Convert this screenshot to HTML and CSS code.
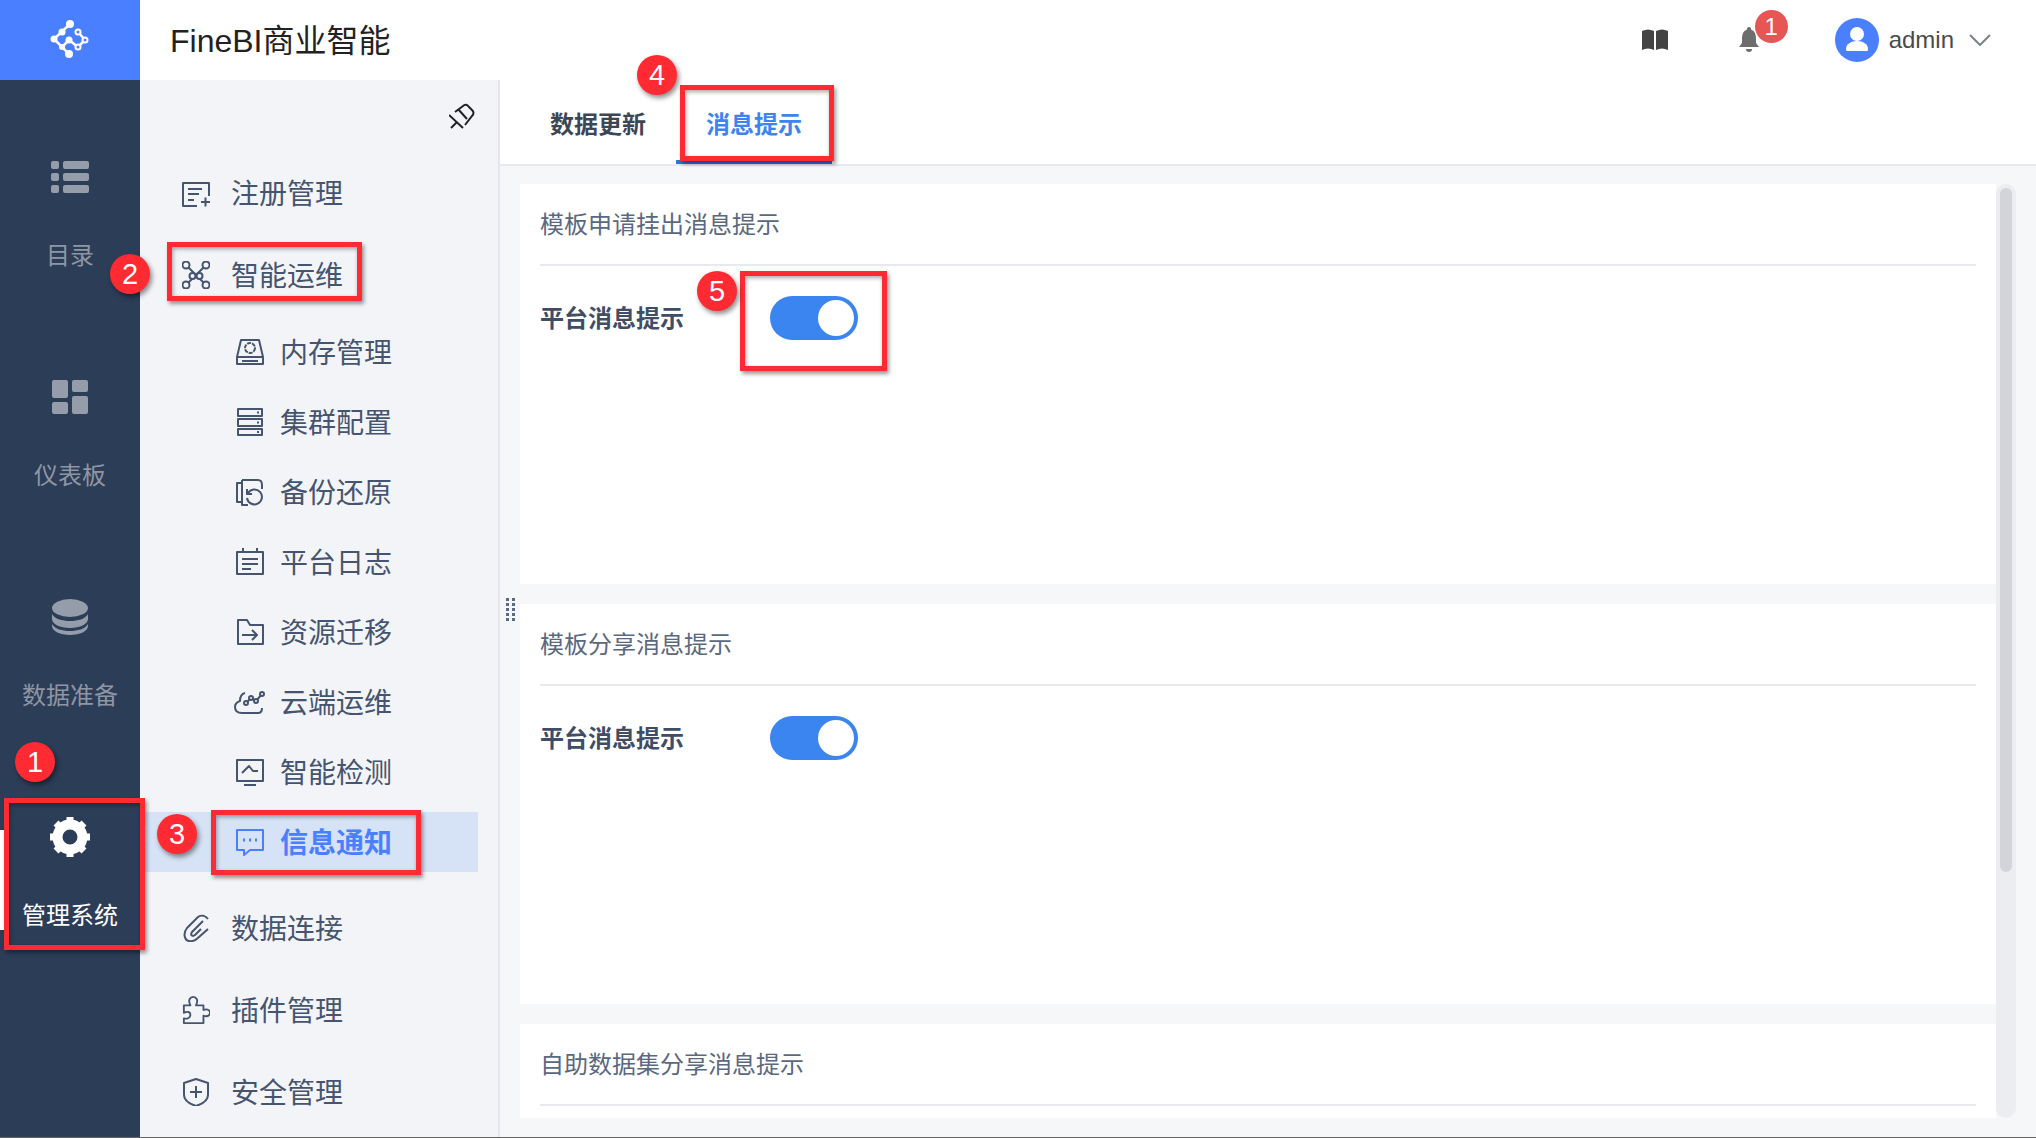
FILE: index.html
```html
<!DOCTYPE html>
<html lang="zh-CN">
<head>
<meta charset="UTF-8">
<meta name="viewport" content="width=device-width, initial-scale=1.0">
<title>FineBI商业智能</title>
<link rel="stylesheet" href="styles.css">
</head>
<body>
  <div class="app">
    <!-- left rail -->
    <aside class="rail">
      <div class="logo">
        <svg width="60" height="60" viewBox="0 0 60 60">
          <path class="logo-line" d="M30 14L14 29L29 44M22 37L29 30L38 37L45 30L38 22"/>
          <circle class="logo-dot" cx="30" cy="14" r="4"/>
          <circle class="logo-dot" cx="22" cy="22" r="3.5"/>
          <circle class="logo-dot" cx="14" cy="29" r="3.5"/>
          <circle class="logo-dot" cx="29" cy="30" r="3.5"/>
          <circle class="logo-dot" cx="22" cy="37" r="3"/>
          <circle class="logo-dot" cx="29" cy="44" r="4"/>
          <circle class="logo-ring" cx="38" cy="22" r="2.5"/>
          <circle class="logo-ring" cx="45" cy="30" r="2.5"/>
          <circle class="logo-ring" cx="38" cy="37" r="2.5"/>
        </svg>
      </div>
      <a class="rail-item">
        <svg class="rail-icon" width="40" height="40" viewBox="0 0 40 40">
          <rect x="1" y="4" width="8" height="8" rx="2"/><rect x="13" y="4" width="26" height="8" rx="2"/>
          <rect x="1" y="16" width="8" height="8" rx="2"/><rect x="13" y="16" width="26" height="8" rx="2"/>
          <rect x="1" y="28" width="8" height="8" rx="2"/><rect x="13" y="28" width="26" height="8" rx="2"/>
        </svg>
        <span class="rail-text">目录</span>
      </a>
      <a class="rail-item">
        <svg class="rail-icon" width="40" height="40" viewBox="0 0 40 40">
          <rect x="2" y="3" width="16" height="18" rx="2"/><rect x="22" y="3" width="16" height="12" rx="2"/>
          <rect x="2" y="25" width="16" height="12" rx="2"/><rect x="22" y="19" width="16" height="18" rx="2"/>
        </svg>
        <span class="rail-text">仪表板</span>
      </a>
      <a class="rail-item">
        <svg class="rail-icon" width="40" height="40" viewBox="0 0 40 40">
          <ellipse cx="20" cy="11" rx="18" ry="9"/>
          <path d="M2 17c3 5 10 7 18 7s15-2 18-7v5c0 5-8 9-18 9S2 27 2 22z"/>
          <path d="M2 27c3 5 10 7 18 7s15-2 18-7v2c0 5-8 9-18 9S2 34 2 29z"/>
        </svg>
        <span class="rail-text">数据准备</span>
      </a>
      <a class="rail-item active">
        <svg class="rail-icon" width="40" height="40" viewBox="-20 -20 40 40">
          <circle class="gear-ring" r="12.5"/>
          <path class="gear-teeth" d="M0-20V-14M0 14V20M-20 0H-14M14 0H20M-14-14L-10-10M10 10L14 14M14-14L10-10M-10 10L-14 14"/>
        </svg>
        <span class="rail-text">管理系统</span>
      </a>
    </aside>

    <div class="main">
      <header class="topbar">
        <h1 class="title">FineBI商业智能</h1>
        <div class="top-tools">
          <svg class="book" width="26" height="24" viewBox="0 0 26 24">
            <path d="M0 3Q6 0 12 3V22Q6 19 0 22Z"/><path d="M26 3Q20 0 14 3V22Q20 19 26 22Z"/>
          </svg>
          <div class="bell-wrap">
            <svg width="20" height="26" viewBox="0 0 20 26">
              <path d="M10 0a2 2 0 0 1 2 2.500C16 4 17 8 17 12v4l3 4H0l3-4v-4C3 8 4 4 8 2.500A2 2 0 0 1 10 0z"/>
              <path d="M7 22h6a3 3 0 0 1-6 0z"/>
            </svg>
            <span class="bell-badge">1</span>
          </div>
          <div class="user">
            <svg width="44" height="44" viewBox="0 0 44 44">
              <circle class="avatar-bg" cx="22" cy="22" r="22"/>
              <circle class="avatar-fg" cx="22" cy="16" r="7"/>
              <path class="avatar-fg" d="M12 33c-1 0-1-1-1-2 0-5 5-8 11-8s11 3 11 8c0 1 0 2-1 2z"/>
            </svg>
            <span class="user-name">admin</span>
            <svg class="chevron" width="22" height="12" viewBox="0 0 22 12"><path d="M1 1L11 11L21 1"/></svg>
          </div>
        </div>
      </header>

      <div class="body">
        <nav class="sidebar">
          <div class="pin-row">
            <svg class="pin" width="26" height="26" viewBox="0 0 26 26">
              <path d="M0 12L14 25M6 9L14 3Q17 0 20 4L23 7Q26 10 23 13L16 22M9 6L18 16M2 25L8 19"/>
            </svg>
          </div>

          <a class="nav-item">
            <svg class="ico" width="28" height="28" viewBox="0 0 28 28"><path d="M27 17V4H1V27H15M6 10H20M6 15H17M6 21H12M19 23H28M23.500 18.500V27.500"/></svg>
            <span class="label">注册管理</span>
          </a>
          <a class="nav-item">
            <svg class="ico" width="28" height="28" viewBox="0 0 28 28">
              <path d="M4 4L24 24M24 4L4 24"/>
              <circle class="ico-node" cx="4" cy="4" r="3.500"/><circle class="ico-node" cx="24" cy="4" r="3.500"/>
              <circle class="ico-node" cx="4" cy="24" r="3.500"/><circle class="ico-node" cx="24" cy="24" r="3.500"/>
              <circle class="ico-node" cx="10.500" cy="15" r="3"/><circle class="ico-node" cx="17.500" cy="15" r="3"/>
            </svg>
            <span class="label">智能运维</span>
          </a>
          <div class="sub-list">
            <a class="sub-item">
              <svg class="ico" width="28" height="28" viewBox="0 0 28 28"><path d="M5 2H23L27 19V26H1V19ZM1 19H27M6 23H22"/><circle cx="14" cy="10" r="5" stroke-dasharray="4 1"/></svg>
              <span class="label">内存管理</span>
            </a>
            <a class="sub-item">
              <svg class="ico" width="28" height="28" viewBox="0 0 28 28"><path d="M2 1H26V8H2ZM2 11H26V18H2ZM2 21H26V27H2ZM21 4.500H23M21 14.500H23M21 24H23"/></svg>
              <span class="label">集群配置</span>
            </a>
            <a class="sub-item">
              <svg class="ico" width="28" height="28" viewBox="0 0 28 28"><path d="M6 2H22C25 2 26 4 26 7V11M6 2V27H12M6 5H1V24H6M12 15A7.500 7.500 0 1 1 11 20M11 11V16H16"/></svg>
              <span class="label">备份还原</span>
            </a>
            <a class="sub-item">
              <svg class="ico" width="28" height="28" viewBox="0 0 28 28"><path d="M1 4H27V26H1ZM7 0V4M21 0V4M6 11H22M6 16H22M6 21H15"/></svg>
              <span class="label">平台日志</span>
            </a>
            <a class="sub-item">
              <svg class="ico" width="28" height="28" viewBox="0 0 28 28"><path d="M2 2H11L14 7H27V26H2ZM6 17H21M16 12L21 17L16 22"/></svg>
              <span class="label">资源迁移</span>
            </a>
            <a class="sub-item">
              <svg class="ico ico-wide" width="32" height="28" viewBox="0 0 32 28"><path d="M11 5C7 6 6 9 6 13C3 14 1 16 1 19C1 23 4 25 8 25H24C27 25 28 23 28 20"/><path d="M12 15L17 10L22 13L28 6"/><circle class="ico-node" cx="12" cy="15" r="2"/><circle class="ico-node" cx="17" cy="10" r="2"/><circle class="ico-node" cx="22" cy="13" r="2"/><circle class="ico-node" cx="28" cy="6" r="2"/></svg>
              <span class="label">云端运维</span>
            </a>
            <a class="sub-item">
              <svg class="ico" width="28" height="28" viewBox="0 0 28 28"><path d="M1 2H27V23H1ZM8 27H20M6 15L13 8L17 13H22"/></svg>
              <span class="label">智能检测</span>
            </a>
            <a class="sub-item selected">
              <svg class="ico" width="28" height="28" viewBox="0 0 28 28"><path d="M1 2H27V22H14L8 27V22H1Z"/><path class="ico-dots" d="M7 12H9M13 12H15M19 12H21"/></svg>
              <span class="label">信息通知</span>
            </a>
          </div>
          <a class="nav-item">
            <svg class="ico" width="28" height="28" viewBox="0 0 28 28"><path d="M26 5C23 1 19 1 16 3L5 14C1 19 2 26 7 27C11 28 14 26 17 23L26 15M21 7L10 18C8 21 10 23 13 21L19 15"/></svg>
            <span class="label">数据连接</span>
          </a>
          <a class="nav-item">
            <svg class="ico" width="28" height="28" viewBox="0 0 30 30"><path d="M2 10H9C6 4 9 1 12 1S18 4 15 10H23V15C28 13 30 16 30 18S28 23 23 21V29H2V24C6 25 9 23 9 20S6 16 2 18Z"/></svg>
            <span class="label">插件管理</span>
          </a>
          <a class="nav-item">
            <svg class="ico" width="28" height="28" viewBox="0 0 28 28"><path d="M14 1L26 5V17C26 22 20 26 14 28C8 26 2 22 2 17V5ZM14 8V20M8 14H20"/></svg>
            <span class="label">安全管理</span>
          </a>
        </nav>

        <section class="content">
          <div class="tabs">
            <a class="tab">数据更新</a>
            <a class="tab active">消息提示</a>
          </div>
          <div class="panel">
            <div class="cards">
              <div class="card">
                <h3 class="card-title">模板申请挂出消息提示</h3>
                <div class="card-row">
                  <span class="row-label">平台消息提示</span>
                  <span class="switch"><span class="knob"></span></span>
                </div>
              </div>
              <div class="card">
                <h3 class="card-title">模板分享消息提示</h3>
                <div class="card-row">
                  <span class="row-label">平台消息提示</span>
                  <span class="switch"><span class="knob"></span></span>
                </div>
              </div>
              <div class="card">
                <h3 class="card-title">自助数据集分享消息提示</h3>
              </div>
            </div>
            <div class="scrollbar"><div class="scroll-thumb"></div></div>
          </div>
        </section>
      </div>
    </div>
  </div>
  <div class="bottom-line"></div>

  <!-- drag handle between the menu and the content -->
  <svg class="grip" width="10" height="24" viewBox="0 0 10 24">
    <rect x="0" y="0" width="3" height="3"/><rect x="6" y="0" width="3" height="3"/>
    <rect x="0" y="5" width="3" height="3"/><rect x="6" y="5" width="3" height="3"/>
    <rect x="0" y="10" width="3" height="3"/><rect x="6" y="10" width="3" height="3"/>
    <rect x="0" y="15" width="3" height="3"/><rect x="6" y="15" width="3" height="3"/>
    <rect x="0" y="20" width="3" height="3"/><rect x="6" y="20" width="3" height="3"/>
  </svg>

  <!-- red annotations laid over the screenshot -->
  <div class="box box-1"></div>
  <div class="box box-2"></div>
  <div class="box box-3"></div>
  <div class="box box-4"></div>
  <div class="box box-5"></div>
  <span class="step step-1">1</span>
  <span class="step step-2">2</span>
  <span class="step step-3">3</span>
  <span class="step step-4">4</span>
  <span class="step step-5">5</span>
</body>
</html>
```

FILE: styles.css
```css
* {
  box-sizing: border-box;
}
html, body {
  margin: 0;
  height: 100%;
}
body {
  position: relative;
  width: 2036px;
  height: 1138px;
  overflow: hidden;
  font-family: "Liberation Sans", "Noto Sans CJK SC", sans-serif;
  background-color: #fff;
}
.app {
  display: flex;
  height: 1137px;
}
.bottom-line {
  height: 1px;
  background-color: #666;
}

/* left rail */
.rail {
  position: relative;
  flex: none;
  width: 140px;
  background-color: #2c3d58;
}
.logo {
  display: flex;
  align-items: center;
  justify-content: center;
  height: 80px;
  background-color: #4a80ff;
}
.logo-line {
  fill: none;
  stroke: #fff;
  stroke-width: 2.5;
}
.logo-dot {
  fill: #fff;
}
.logo-ring {
  fill: #4a80ff;
  stroke: #fff;
  stroke-width: 2;
}
.rail-item {
  display: flex;
  flex-direction: column;
  align-items: center;
  height: 220px;
  padding-top: 77px;
  gap: 43px;
}
.rail-icon {
  fill: #959caa;
}
.rail-text {
  font-size: 24px;
  line-height: 32px;
  color: #8f96a3;
}
.rail-item.active .rail-icon {
  fill: #fff;
}
.rail-item.active .rail-text {
  color: #fff;
}
.rail-item.active {
  position: relative;
}
.rail-item.active::before {
  content: "";
  position: absolute;
  left: 0;
  top: 90px;
  width: 4px;
  height: 100px;
  background-color: #fff;
}
.gear-ring {
  fill: none;
  stroke: #fff;
  stroke-width: 10;
}
.gear-teeth {
  fill: none;
  stroke: #fff;
  stroke-width: 7;
}

/* header */
.main {
  flex: 1;
  display: flex;
  flex-direction: column;
  min-width: 0;
}
.topbar {
  display: flex;
  align-items: center;
  justify-content: space-between;
  flex: none;
  height: 80px;
  padding: 0 45px 0 30px;
}
.title {
  margin: 0 0 4px;
  font-size: 32px;
  font-weight: normal;
  color: #222;
}
.top-tools {
  display: flex;
  align-items: center;
}
.book {
  fill: #444;
}
.bell-wrap {
  position: relative;
  display: flex;
  margin-left: 71px;
  fill: #6e6e6e;
}
.bell-badge {
  position: absolute;
  left: 16px;
  top: -17px;
  width: 33px;
  height: 33px;
  border-radius: 50%;
  background-color: #e85555;
  color: #fff;
  font-size: 24px;
  line-height: 33px;
  text-align: center;
}
.user {
  display: flex;
  align-items: center;
  margin-left: 76px;
}
.avatar-bg {
  fill: #4a80ff;
}
.avatar-fg {
  fill: #fff;
}
.user-name {
  margin-left: 10px;
  font-size: 24px;
  color: #4a4a4a;
}
.chevron {
  margin-left: 15px;
  fill: none;
  stroke: #7c8087;
  stroke-width: 2;
}

/* second menu */
.body {
  flex: 1;
  display: flex;
  min-height: 0;
}
.sidebar {
  flex: none;
  width: 360px;
  padding-right: 20px;
  overflow: hidden;
  border-right: 2px solid #e4e6ec;
  background-color: #f3f4f8;
}
.pin-row {
  display: flex;
  justify-content: flex-end;
  height: 72px;
  padding: 23px 3px 0 0;
}
.pin {
  fill: none;
  stroke: #222;
  stroke-width: 2;
}
.nav-item {
  display: flex;
  align-items: center;
  height: 82px;
  padding-left: 42px;
  font-size: 28px;
  color: #45556f;
}
.nav-item .ico {
  margin-right: 21px;
}
.label {
  margin-bottom: 3px;
}
.sub-list {
  padding: 6px 0 15px;
}
.sub-item {
  display: flex;
  align-items: center;
  height: 60px;
  margin-bottom: 10px;
  padding-left: 96px;
  font-size: 28px;
  color: #45556f;
}
.sub-list .sub-item:last-child {
  margin-bottom: 0;
}
.sub-item .ico {
  flex: none;
  margin-right: 16px;
}
.sub-item .ico-wide {
  margin-left: -2px;
  margin-right: 14px;
}
.ico {
  flex: none;
  fill: none;
  stroke: #45556f;
  stroke-width: 2;
  stroke-linejoin: round;
}
.ico-node {
  fill: #f3f4f8;
}
.sub-item.selected {
  background-color: #d6e2f6;
  color: #4a80ff;
  font-weight: bold;
}
.sub-item.selected .ico {
  stroke: #4a80ff;
}
.ico-dots {
  stroke-width: 3;
}

/* tabs and cards */
.content {
  flex: 1;
  display: flex;
  flex-direction: column;
  min-width: 0;
  background-color: #f6f7f9;
}
.tabs {
  display: flex;
  flex: none;
  height: 86px;
  padding-left: 20px;
  border-bottom: 2px solid #e8e9ee;
  background-color: #fff;
}
.tab {
  height: 84px;
  padding: 27px 30px 0;
  border-bottom: 4px solid transparent;
  font-size: 24px;
  line-height: 36px;
  font-weight: bold;
  color: #3d4657;
}
.tab.active {
  border-bottom-color: #2f75de;
  color: #3e84f0;
}
.panel {
  flex: 1;
  display: flex;
  min-height: 0;
  padding: 18px 20px 19px 20px;
}
.cards {
  width: 1476px;
  flex: none;
  overflow: hidden;
}
.card {
  height: 400px;
  margin-bottom: 20px;
  padding: 0 20px;
  background-color: #fff;
}
.card-title {
  margin: 0;
  height: 82px;
  border-bottom: 2px solid #e8e9ee;
  font-size: 24px;
  font-weight: normal;
  line-height: 81px;
  color: #5a6880;
}
.card-row {
  display: flex;
  align-items: center;
  height: 104px;
}
.row-label {
  width: 230px;
  margin-bottom: 4px;
  font-size: 24px;
  font-weight: bold;
  color: #3f4d66;
}
.switch {
  display: flex;
  justify-content: flex-end;
  align-items: center;
  width: 88px;
  height: 44px;
  padding-right: 4px;
  border-radius: 22px;
  background-color: #3a85f0;
}
.knob {
  width: 36px;
  height: 36px;
  border-radius: 50%;
  background-color: #fff;
}
.scrollbar {
  flex: none;
  width: 20px;
  padding: 4px;
  border-radius: 10px;
  background-color: #ecedf1;
}
.scroll-thumb {
  width: 12px;
  height: 684px;
  border-radius: 6px;
  background-color: #d2d4da;
}
.grip {
  position: absolute;
  left: 506px;
  top: 598px;
  fill: #5b6a84;
}

/* annotations */
.box {
  position: absolute;
  border: 5px solid #ff2a32;
  box-shadow: 2px 3px 4px rgba(0, 0, 0, 0.4), inset 1px 2px 4px rgba(0, 0, 0, 0.35);
}
.box-1 { left: 4px; top: 798px; width: 141px; height: 152px; }
.box-2 { left: 167px; top: 242px; width: 195px; height: 59px; }
.box-3 { left: 211px; top: 810px; width: 210px; height: 65px; }
.box-4 { left: 680px; top: 85px; width: 154px; height: 76px; }
.box-5 { left: 740px; top: 271px; width: 147px; height: 100px; }
.step {
  position: absolute;
  width: 40px;
  height: 40px;
  border-radius: 50%;
  background-color: #ff2a32;
  box-shadow: 2px 3px 5px rgba(0, 0, 0, 0.45);
  color: #fff;
  font-size: 29px;
  line-height: 40px;
  text-align: center;
}
.step-1 { left: 15px; top: 742px; }
.step-2 { left: 110px; top: 254px; }
.step-3 { left: 157px; top: 814px; }
.step-4 { left: 637px; top: 55px; }
.step-5 { left: 697px; top: 271px; }
```
